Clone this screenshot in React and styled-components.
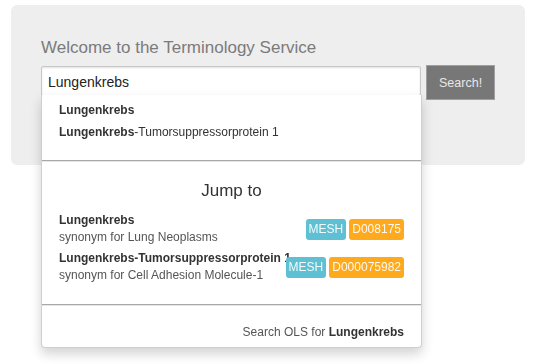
import React from 'react'
import styled, { createGlobalStyle } from 'styled-components';

const Global = createGlobalStyle`
    body {
        margin: 0;
        padding: 5px 8px 0 11px;
        background: #fff;
        font-family: "Liberation Sans", Arial, sans-serif;
        color: #333;
    }
    #root {
        min-height: 359px;
    }
`;

const Jumbotron = styled.div`
    width: 514px;
    box-sizing: border-box;
    background: #eeeeee;
    border-radius: 6px;
    padding: 33px 30px 65px 30px;
`;

const Title = styled.h1`
    margin: 0;
    font-size: 17px;
    line-height: 20px;
    font-weight: normal;
    color: #7b7b7b;
`;

const SearchRow = styled.div`
    display: flex;
    align-items: flex-start;
    gap: 5px;
    margin-top: 7px;
`;

const InputWrap = styled.div`
    position: relative;
    width: 381px;
    margin-top: 1px;
`;

const Input = styled.input`
    display: block;
    width: 100%;
    height: 30px;
    box-sizing: border-box;
    border: 1px solid #c8c8c8;
    border-radius: 2px;
    padding: 2px 6px 0 6px;
    font-family: "Liberation Sans", Arial, sans-serif;
    font-size: 14px;
    color: #222;
    background: #fff;
    box-shadow: inset 0 1px 2px rgba(0,0,0,.12);
    outline: none;
    caret-color: #111;
`;

const Button = styled.button`
    width: 69px;
    height: 35px;
    border: 1px solid #a0a0a0;
    background: #777;
    color: #e8e8e8;
    font-family: "Liberation Sans", Arial, sans-serif;
    font-size: 12.5px;
    padding: 0;
    cursor: pointer;
`;

const Dropdown = styled.div`
    position: absolute;
    top: 29px;
    left: 0;
    width: 381px;
    box-sizing: border-box;
    background: #fff;
    border: 1px solid #cfcfcf;
    border-top: none;
    border-radius: 0 0 4px 4px;
    box-shadow: 0 6px 12px rgba(0,0,0,.175);
    z-index: 5;
`;

const Suggestions = styled.ul`
    list-style: none;
    margin: 0;
    padding: 4px 17px 17px 17px;
`;

const Suggestion = styled.li`
    font-size: 12px;
    line-height: 22px;
    color: #333;
    & b {
        font-weight: bold;
    }
`;

const Rule = styled.hr`
    margin: 0;
    border: none;
    border-top: 1px solid #a8a8a8;
    border-bottom: 1px solid #e6e6e6;
    height: 0;
`;

const JumpSection = styled.div`
    padding: 19px 17px 20px 17px;
`;

const JumpTitle = styled.div`
    text-align: center;
    font-size: 17px;
    line-height: 20px;
    color: #333;
    margin-bottom: 11px;
`;

const JumpItem = styled.div`
    display: flex;
    align-items: center;
    & + & {
        margin-top: 4px;
    }
`;

const JumpText = styled.div`
    flex: 1;
    min-width: 0;
    white-space: nowrap;
    font-size: 12px;
    line-height: 17px;
`;

const JumpLabel = styled.div`
    font-weight: bold;
    color: #333;
`;

const JumpSub = styled.div`
    color: #555;
`;

const Badges = styled.div`
    display: flex;
    flex-shrink: 0;
    gap: 3px;
    position: relative;
`;

const Badge = styled.span`
    display: inline-block;
    height: 21px;
    line-height: 21px;
    padding: 0 3px;
    border-radius: 3px;
    font-size: 12px;
    color: rgba(255,255,255,.92);
    background: ${({bg}) => bg};
`;

const Footer = styled.div`
    padding: 18px 17px 6px 17px;
    text-align: right;
    font-size: 12px;
    line-height: 17px;
    color: #555;
    & b {
        color: #333;
    }
`;

const query = "Lungenkrebs";

const suggestions = [
    { bold: "Lungenkrebs", rest: "" },
    { bold: "Lungenkrebs", rest: "-Tumorsuppressorprotein 1" }
];

const jumps = [
    { label: "Lungenkrebs", sub: "synonym for Lung Neoplasms", onto: "MESH", id: "D008175" },
    { label: "Lungenkrebs-Tumorsuppressorprotein 1", sub: "synonym for Cell Adhesion Molecule-1", onto: "MESH", id: "D000075982" }
];

const App = () => {
    return (
        <>
            <Global />
            <Jumbotron>
                <Title>Welcome to the Terminology Service</Title>
                <SearchRow>
                    <InputWrap>
                        <Input defaultValue={query} autoFocus spellCheck={false} />
                        <Dropdown>
                            <Suggestions>
                                {suggestions.map((s, i) =>
                                    <Suggestion key={i}><b>{s.bold}</b>{s.rest}</Suggestion>
                                )}
                            </Suggestions>
                            <Rule />
                            <JumpSection>
                                <JumpTitle>Jump to</JumpTitle>
                                {jumps.map(j =>
                                    <JumpItem key={j.id}>
                                        <JumpText>
                                            <JumpLabel>{j.label}</JumpLabel>
                                            <JumpSub>{j.sub}</JumpSub>
                                        </JumpText>
                                        <Badges>
                                            <Badge bg="#5ec0d2">{j.onto}</Badge>
                                            <Badge bg="#ffaa1c">{j.id}</Badge>
                                        </Badges>
                                    </JumpItem>
                                )}
                            </JumpSection>
                            <Rule />
                            <Footer>Search OLS for <b>{query}</b></Footer>
                        </Dropdown>
                    </InputWrap>
                    <Button>Search!</Button>
                </SearchRow>
            </Jumbotron>
        </>
    );
};

export default App;
